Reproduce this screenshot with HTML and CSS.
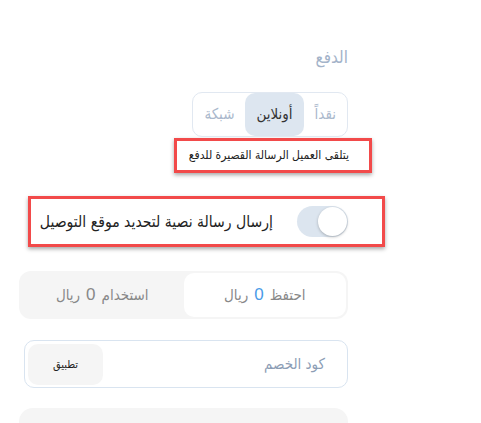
FILE: index.html
```html
<!DOCTYPE html>
<html lang="ar">
<head>
    <meta charset="UTF-8">
    <meta name="viewport" content="width=device-width, initial-scale=1.0">
    <title>الدفع</title>
    <link rel="stylesheet" href="styles.css">
</head>
<body>

<div class="page" dir="rtl">
    <h3 class="title">الدفع</h3>

    <div class="seg-wrap">
        <div class="seg">
            <span class="seg-item">نقداً</span>
            <span class="seg-item active">أونلاين</span>
            <span class="seg-item">شبكة</span>
        </div>
    </div>

    <div class="note mark">يتلقى العميل الرسالة القصيرة للدفع</div>

    <div class="sms-row mark">
        <span class="toggle"><span class="knob"></span></span>
        <span class="sms-text">إرسال رسالة نصية لتحديد موقع التوصيل</span>
    </div>

    <div class="points">
        <div class="points-item active">احتفظ <b>0</b> ريال</div>
        <div class="points-item">استخدام <b class="grey">0</b> ريال</div>
    </div>

    <div class="coupon">
        <span class="coupon-placeholder">كود الخصم</span>
        <button class="coupon-btn">تطبيق</button>
    </div>

    <div class="summary"></div>
</div>

</body>
</html>
```

FILE: styles.css
```css
body {
    margin: 0;
    background: #fff;
    font-family: "DejaVu Sans Condensed", "DejaVu Sans", sans-serif;
}
.page {
    width: 329px;
    margin-left: 19px;
    margin-right: auto;
    padding-top: 45px;
    direction: rtl;
    white-space: nowrap;
}
.title {
    margin: 0;
    font-size: 17px;
    font-weight: normal;
    line-height: 24px;
    height: 22px;
    color: #a3b3c9;
}
.seg-wrap {
    margin-top: 25px;
}
.seg {
    display: inline-flex;
    height: 45px;
    box-sizing: border-box;
    border: 1px solid #e1e8f1;
    border-radius: 10px;
}
.seg-item {
    padding: 0 11px;
    line-height: 43px;
    font-size: 15px;
    color: #aab8cc;
    border-radius: 10px;
}
.seg-item.active {
    background: #dde6f0;
    color: #333;
}
.mark {
    box-sizing: border-box;
    border: 3px solid #f24a4a;
    box-shadow: 0 2px 4px rgba(0, 0, 0, 0.35);
}
.note {
    margin-top: 1px;
    margin-right: -24px;
    width: 198px;
    height: 35px;
    padding-right: 20px;
    font-size: 12px;
    line-height: 29px;
    color: #222;
}
.sms-row {
    margin-top: 23px;
    margin-right: -37px;
    width: 357px;
    height: 51px;
    padding-right: 34px;
    display: flex;
    align-items: center;
    gap: 24px;
}
.toggle {
    width: 51px;
    height: 31px;
    border-radius: 16px;
    background: #dce5ef;
    display: flex;
    justify-content: flex-start;
    align-items: center;
}
.knob {
    width: 29px;
    height: 29px;
    margin-right: 1px;
    border-radius: 50%;
    background: #fff;
    box-shadow: 0 1px 3px rgba(0, 0, 0, 0.25);
}
.sms-text {
    font-size: 15.6px;
    color: #222;
}
.points {
    margin-top: 24px;
    height: 48px;
    box-sizing: border-box;
    padding: 2px;
    background: #f5f5f5;
    border-radius: 12px;
    display: flex;
}
.points-item {
    flex: 1;
    display: flex;
    align-items: center;
    justify-content: center;
    font-size: 15px;
    color: #888;
    border-radius: 10px;
}
.points-item.active {
    background: #fff;
}
.points-item b {
    font-family: "Liberation Sans", Arial, sans-serif;
    font-weight: normal;
    font-size: 17px;
    color: #4a9be8;
    margin: 0 6px;
}
.points-item b.grey {
    color: #888;
}
.coupon {
    margin-top: 21px;
    margin-left: 5px;
    height: 48px;
    box-sizing: border-box;
    border: 1px solid #d9e4f0;
    border-radius: 10px;
    padding: 3px 22px 3px 3px;
    display: flex;
    align-items: center;
    justify-content: space-between;
}
.coupon-placeholder {
    font-size: 15px;
    color: #8c9db5;
}
.coupon-btn {
    width: 75px;
    height: 41px;
    border: none;
    border-radius: 10px;
    background: #f5f5f5;
    font-family: inherit;
    font-size: 11px;
    color: #222;
}
.summary {
    margin-top: 20px;
    height: 40px;
    background: #f5f5f5;
    border-radius: 14px;
}
```
